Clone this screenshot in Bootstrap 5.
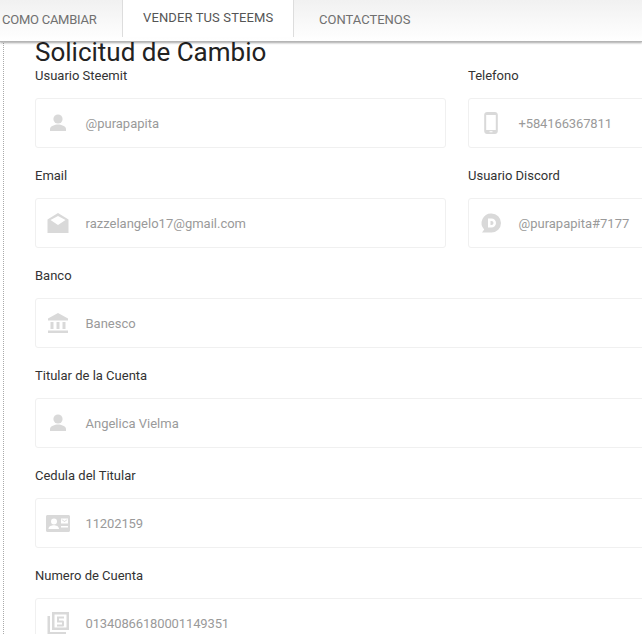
<!DOCTYPE html>
<html lang="es">
<head>
<meta charset="utf-8">
<title>Solicitud de Cambio</title>
<link href="https://cdn.jsdelivr.net/npm/bootstrap@5.3.0/dist/css/bootstrap.min.css" rel="stylesheet">
<style>
html,body{height:634px;overflow:hidden;background:#fff}
body{font-family:Roboto,"Liberation Sans",sans-serif;font-size:14px;color:#333;position:relative}
.topbar{height:41px;background:linear-gradient(#f1f1f1,#fff);box-shadow:0 1px 0 #b5b5b5,0 2px 2px rgba(0,0,0,.35);position:relative;z-index:2;white-space:nowrap}
.tab-item{font-size:13px;color:#707070;display:block;line-height:14px;padding-top:13px;height:37px;text-decoration:none}
.tab-first{padding-left:2px;width:122px;flex:none;letter-spacing:-.25px}
.tab-active{flex:none;width:172px;height:37px;background:#fff;border-left:1px solid #ddd;border-right:1px solid #ddd;padding:11px 0 0 20px;color:#555;letter-spacing:.12px}
.tab-last{padding-left:25px}
.rail{position:absolute;left:3px;top:41px;bottom:0;border-left:1px dotted #aaa}
.sheet{padding-left:35px;width:1000px;line-height:1}
.sheet h1{font-size:26px;font-weight:400;color:#222;line-height:22px;height:22px;margin:0}
.field-line{display:flex;gap:22px;height:100px}
.field-half{width:411px;flex:none}
.field-label{display:block;font-size:13px;line-height:20px;height:20px;margin:3px 0 12px;color:#333}
.value-box{height:50px;border:1px solid #f0f0f0;border-radius:3px;display:flex;align-items:center;padding-left:10px;background:#fff}
.ico-cell{width:24px;height:24px;flex:none;display:block;color:#d9d9d9}
.ico-cell svg{display:block;width:24px;height:24px;fill:currentColor}
.value-text{margin-left:15.5px;font-size:13px;color:#9a9a9a}
.value-digits{letter-spacing:-.13px}
</style>
</head>
<body>
<nav class="topbar d-flex">
  <a class="tab-item tab-first" href="#">COMO CAMBIAR</a>
  <a class="tab-item tab-active" href="#">VENDER TUS STEEMS</a>
  <a class="tab-item tab-last" href="#">CONTACTENOS</a>
</nav>
<div class="rail"></div>
<main class="sheet">
  <h1>Solicitud de Cambio</h1>
  <div class="field-line">
    <div class="field-half">
      <label class="field-label">Usuario Steemit</label>
      <div class="value-box"><span class="ico-cell"><svg viewBox="0 0 24 24"><circle cx="12" cy="8" r="4.6"/><path d="M4 20v-2c0-3 5-4.6 8-4.6s8 1.6 8 4.6v2z"/></svg></span><span class="value-text">@purapapita</span></div>
    </div>
    <div class="field-half">
      <label class="field-label">Telefono</label>
      <div class="value-box"><span class="ico-cell"><svg viewBox="0 0 24 24"><path fill-rule="evenodd" d="M8 1h8c1.500 0 2.800 1.200 2.800 2.800v16.400c0 1.600-1.300 2.800-2.800 2.800H8c-1.500 0-2.800-1.200-2.800-2.800V3.800C5.200 2.200 6.500 1 8 1zM7.200 4v15h9.600V4zM10.500 20.200v1h3v-1z"/></svg></span><span class="value-text value-digits">+584166367811</span></div>
    </div>
  </div>
  <div class="field-line">
    <div class="field-half">
      <label class="field-label">Email</label>
      <div class="value-box"><span class="ico-cell"><svg viewBox="0 0 24 24"><path d="M12 2 1.500 8.500V22h21V8.500zM12 14 4.500 9 12 5l7.500 4z" fill-rule="evenodd"/></svg></span><span class="value-text">razzelangelo17@gmail.com</span></div>
    </div>
    <div class="field-half">
      <label class="field-label">Usuario Discord</label>
      <div class="value-box"><span class="ico-cell"><svg viewBox="0 0 24 24"><path fill-rule="evenodd" d="M12.500 2.500a9.500 9.500 0 1 1 0 19H3l2.200-3A9.500 9.500 0 0 1 12.500 2.500zM9 7.500v9h3.500a4.500 4.500 0 0 0 0-9zM11.500 10h1a2 2 0 0 1 0 4h-1z"/></svg></span><span class="value-text">@purapapita#7177</span></div>
    </div>
  </div>
  <div class="field-line">
    <div class="flex-grow-1">
      <label class="field-label">Banco</label>
      <div class="value-box"><span class="ico-cell"><svg viewBox="0 0 24 24"><path d="M12 2 2 7.500V9.500h20V7.500zM4.500 11h3v7h-3zM10.500 11h3v7h-3zM16.500 11h3v7h-3zM2 19.500h20V22H2z"/></svg></span><span class="value-text">Banesco</span></div>
    </div>
  </div>
  <div class="field-line">
    <div class="flex-grow-1">
      <label class="field-label">Titular de la Cuenta</label>
      <div class="value-box"><span class="ico-cell"><svg viewBox="0 0 24 24"><circle cx="12" cy="8" r="4.600"/><path d="M4 20v-2c0-3 5-4.600 8-4.600s8 1.600 8 4.600v2z"/></svg></span><span class="value-text">Angelica Vielma</span></div>
    </div>
  </div>
  <div class="field-line">
    <div class="flex-grow-1">
      <label class="field-label">Cedula del Titular</label>
      <div class="value-box"><span class="ico-cell"><svg viewBox="0 0 24 24"><path fill-rule="evenodd" d="M1.500 4h21c.8 0 1.500.7 1.500 1.500v14c0 .8-.7 1.500-1.500 1.500h-21C.7 21 0 20.300 0 19.500v-14C0 4.700.7 4 1.500 4zM8 7.500a3 3 0 1 0 0 6 3 3 0 0 0 0-6zM2.500 18h10.500c0-2.800-3-3.800-5.200-3.800s-5.300 1-5.300 3.800zM15 7.500v5h7v-5zM15.800 8.300l2.700 1.800 2.700-1.800v.8l-2.700 1.800-2.700-1.800zM15 15v1.500h7V15z"/></svg></span><span class="value-text value-digits">11202159</span></div>
    </div>
  </div>
  <div class="field-line">
    <div class="flex-grow-1">
      <label class="field-label">Numero de Cuenta</label>
      <div class="value-box"><span class="ico-cell"><svg viewBox="0 0 24 24"><path fill-rule="evenodd" d="M6 1h17v18H6zM8.500 3.500v13h12v-13zM11 5.500h7v2h-5v2h3.500c1 0 1.500.6 1.500 1.500v3c0 1-.5 1.500-1.500 1.500H11v-2h5v-2h-5zM1.500 5H4v16h16v2.500H1.500z"/></svg></span><span class="value-text value-digits">01340866180001149351</span></div>
    </div>
  </div>
</main>
<script src="https://cdn.jsdelivr.net/npm/bootstrap@5.3.0/dist/js/bootstrap.bundle.min.js"></script>
</body>
</html>
